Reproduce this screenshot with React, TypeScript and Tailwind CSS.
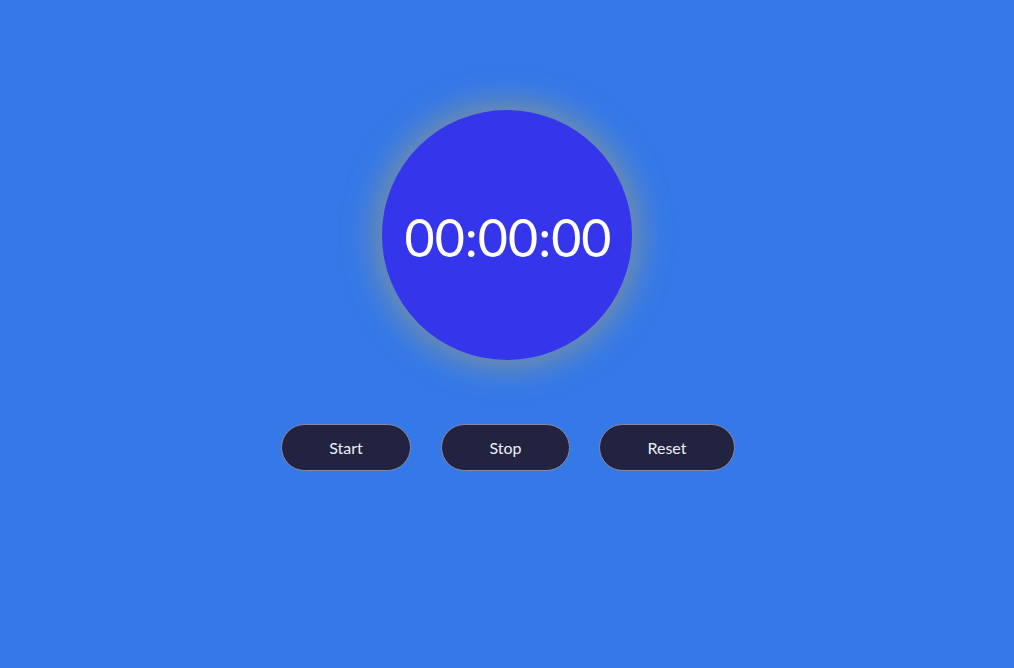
import React from "react";

export default function App() {
  const btn =
    "h-[47px] rounded-full bg-[#222241] border border-[#8a8aa0] text-[#eeeef5] text-[16px] flex items-center justify-center";
  return (
    <div
      className="w-full h-[668px] bg-[#3579e9] flex flex-col items-center"
      style={{ fontFamily: "Lato, 'Noto Sans', sans-serif" }}
    >
      <div className="mt-[110px] w-[250px] h-[250px] rounded-full bg-[#3535eb] flex items-center justify-center shadow-[0_0_30px_8px_rgba(170,160,110,0.55)]">
        <span className="text-white text-[52px] leading-none pt-[4px] pl-[2px]">00:00:00</span>
      </div>
      <div className="mt-[64px] flex pl-[2px]">
        <button className={`${btn} w-[130px]`}>Start</button>
        <button className={`${btn} w-[129px] ml-[30px]`}>Stop</button>
        <button className={`${btn} w-[136px] ml-[29px]`}>Reset</button>
      </div>
    </div>
  );
}
